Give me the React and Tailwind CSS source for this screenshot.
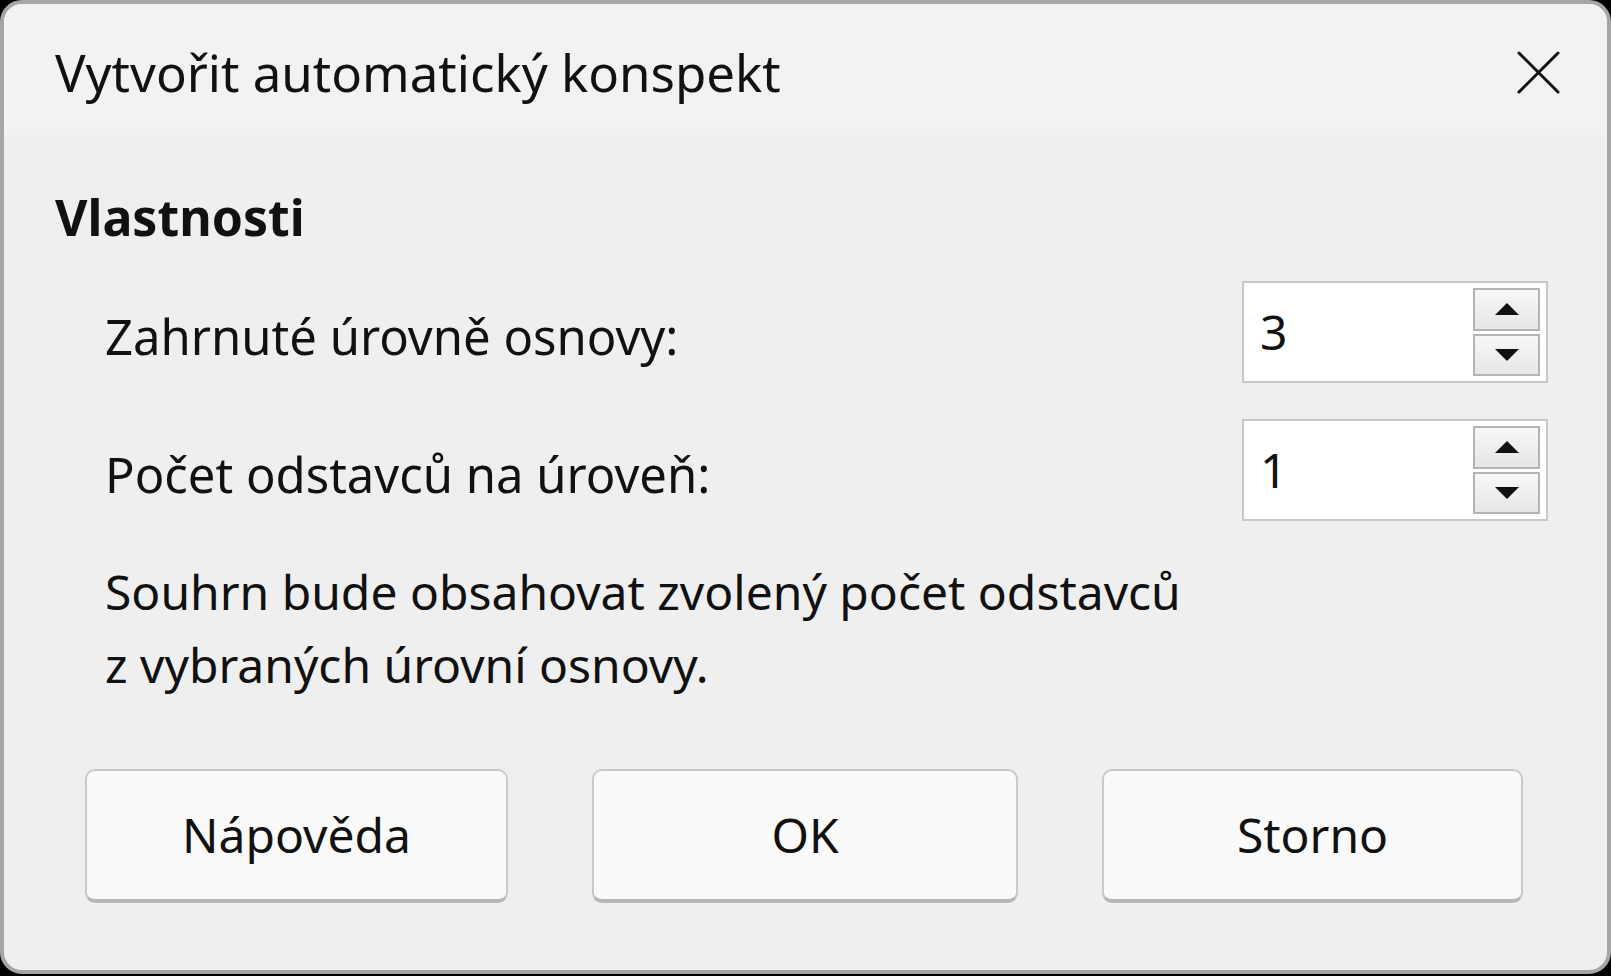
import React, { useState } from "react";

const font = { fontFamily: '"Noto Sans", "Open Sans", sans-serif' };

const Spin = ({ value, onUp, onDown }) => (
  <div className="flex h-[102px] w-[306px] items-stretch border-2 border-[#c8c8c8] bg-white">
    <div className="flex flex-1 items-center pl-[16px] text-[48px] text-[#111]">
      {value}
    </div>
    <div className="flex w-[73px] flex-col gap-[3px] py-[5px] pr-[6px]">
      <button
        onClick={onUp}
        className="flex flex-1 items-center justify-center border-2 border-[#b4b4b4] bg-gradient-to-b from-[#f7f7f7] to-[#e6e6e6]"
      >
        <svg width="26" height="14" viewBox="0 0 26 14">
          <path d="M13 1 L25 13 L1 13 Z" fill="#111" />
        </svg>
      </button>
      <button
        onClick={onDown}
        className="flex flex-1 items-center justify-center border-2 border-[#b4b4b4] bg-gradient-to-b from-[#f7f7f7] to-[#e6e6e6]"
      >
        <svg width="26" height="14" viewBox="0 0 26 14">
          <path d="M1 1 L25 1 L13 13 Z" fill="#111" />
        </svg>
      </button>
    </div>
  </div>
);

const Btn = ({ children, w }) => (
  <button
    className={`flex h-[134px] items-center justify-center rounded-[10px] border-2 border-b-4 border-[#c9c9c9] border-b-[#b6b6b6] bg-[#fafafa] text-[48px] text-[#111] ${w}`}
  >
    {children}
  </button>
);

export default function App() {
  const [levels, setLevels] = useState(3);
  const [paras, setParas] = useState(1);

  return (
    <div className="h-[976px] w-[1611px] bg-black" style={font}>
      <div className="flex h-[974px] w-full flex-col overflow-hidden rounded-[22px] border-[4px] border-[#a6a6a6] bg-[#efefef]">
        {/* title bar */}
        <div className="flex h-[131px] items-start justify-between bg-[#f2f2f2] pl-[51px] pr-[47px] pt-[38px]">
          <span className="text-[51px] leading-[60px] text-[#111]">
            Vytvořit automatický konspekt
          </span>
          <svg width="43" height="43" viewBox="0 0 43 43" className="mt-[9px]">
            <path
              d="M2 2 L41 41 M41 2 L2 41"
              stroke="#111"
              strokeWidth="3"
              strokeLinecap="round"
            />
          </svg>
        </div>

        {/* body */}
        <div className="flex flex-col pl-[51px] pr-[59px]">
          <div className="mt-[52px] text-[50px] font-bold leading-[60px] text-[#111]">
            Vlastnosti
          </div>

          <div className="mt-[34px] flex flex-col gap-[36px] pl-[50px]">
            <div className="flex items-center justify-between">
              <span className="pt-[10px] text-[49px] text-[#111]">Zahrnuté úrovně osnovy:</span>
              <Spin
                value={levels}
                onUp={() => setLevels(levels + 1)}
                onDown={() => setLevels(Math.max(1, levels - 1))}
              />
            </div>
            <div className="flex items-center justify-between">
              <span className="pt-[10px] text-[49px] text-[#111]">Počet odstavců na úroveň:</span>
              <Spin
                value={paras}
                onUp={() => setParas(paras + 1)}
                onDown={() => setParas(Math.max(1, paras - 1))}
              />
            </div>
            <p className="-mt-[2px] text-[48px] leading-[73px] text-[#111]">
              Souhrn bude obsahovat zvolený počet odstavců
              <br />z vybraných úrovní osnovy.
            </p>
          </div>
        </div>

        {/* buttons */}
        <div className="mt-[68px] flex gap-[84px] pl-[81px]">
          <Btn w="w-[423px]">Nápověda</Btn>
          <Btn w="w-[426px]">OK</Btn>
          <Btn w="w-[421px]">Storno</Btn>
        </div>
      </div>
    </div>
  );
}
